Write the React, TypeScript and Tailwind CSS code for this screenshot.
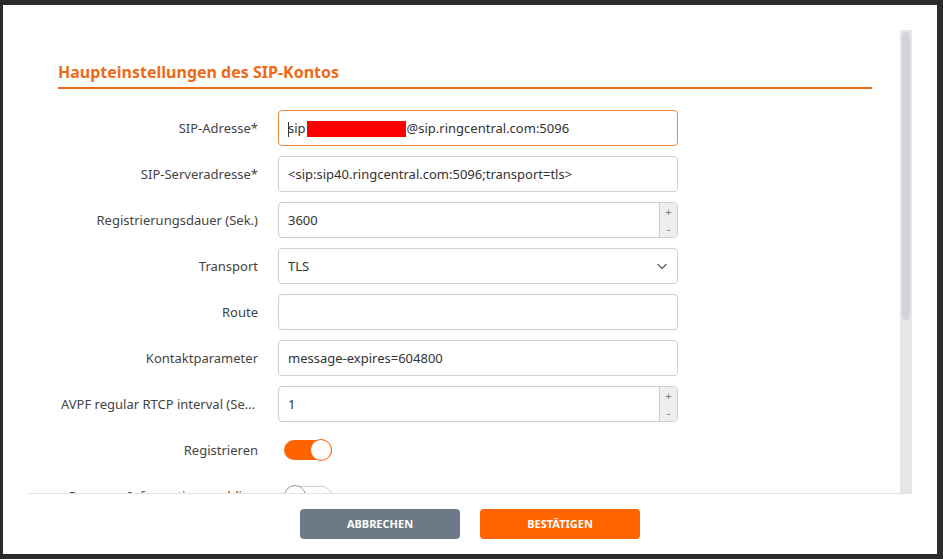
import React from "react";

const font = { fontFamily: '"Noto Sans", "Open Sans", sans-serif' };

function Label({ children }: { children: React.ReactNode }) {
    return (
        <div className="truncate pl-[3px] pt-[2px] text-right text-[13px] text-[#444]">{children}</div>
    );
}

function TextInput({ value, focused }: { value: React.ReactNode; focused?: boolean }) {
    return (
        <div
            className={
                "flex h-[36px] w-[400px] items-center rounded-[4px] border bg-white px-[9px] pt-[2px] text-[13px] text-[#333] " +
                (focused ? "border-[#ec8a3e]" : "border-[#cfcfcf]")
            }
        >
            {value}
        </div>
    );
}

function NumberInput({ value }: { value: string }) {
    return (
        <div className="flex h-[36px] w-[400px] overflow-hidden rounded-[4px] border border-[#cfcfcf] bg-white text-[13px] text-[#333]">
            <div className="flex flex-1 items-center px-[9px] pt-[2px]">{value}</div>
            <div className="flex w-[18px] flex-col border-l border-[#cfcfcf] bg-[#eeeeee] text-[11px] leading-none text-[#777]">
                <div className="flex flex-1 items-center justify-center">+</div>
                <div className="flex flex-1 items-center justify-center">-</div>
            </div>
        </div>
    );
}

function SelectInput({ value }: { value: string }) {
    return (
        <div className="flex h-[36px] w-[400px] items-center justify-between rounded-[4px] border border-[#cfcfcf] bg-white pl-[9px] pr-[9px] text-[13px] text-[#333]">
            <span className="pt-[2px]">{value}</span>
            <svg width="12" height="12" viewBox="0 0 12 12" fill="none">
                <path d="M1.5 4l4.5 4.5L10.5 4" stroke="#666" strokeWidth="1.3" />
            </svg>
        </div>
    );
}

function Toggle({ on }: { on: boolean }) {
    return on ? (
        <div className="relative h-[20px] w-[48px] rounded-full bg-[#ff6300]">
            <div className="absolute right-0 top-[-1px] h-[22px] w-[22px] rounded-full border border-[#ff6300] bg-white" />
        </div>
    ) : (
        <div className="relative h-[20px] w-[48px] rounded-full border border-[#cfcfcf] bg-white">
            <div className="absolute left-[-1px] top-[-2px] h-[22px] w-[22px] rounded-full border border-[#999] bg-white" />
        </div>
    );
}

export default function App() {
    const rows: { label: string; field: React.ReactNode }[] = [
        {
            label: "SIP-Adresse*",
            field: (
                <TextInput
                    focused
                    value={
                        <span className="flex items-center">
                            <span className="mr-[-1px] inline-block h-[15px] w-px bg-[#333]" />
                            sip
                            <span className="mx-[1px] inline-block h-[16px] w-[99px] bg-[#ff0000]" />
                            @sip.ringcentral.com:5096
                        </span>
                    }
                />
            ),
        },
        { label: "SIP-Serveradresse*", field: <TextInput value="<sip:sip40.ringcentral.com:5096;transport=tls>" /> },
        { label: "Registrierungsdauer (Sek.)", field: <NumberInput value="3600" /> },
        { label: "Transport", field: <SelectInput value="TLS" /> },
        { label: "Route", field: <TextInput value="" /> },
        { label: "Kontaktparameter", field: <TextInput value="message-expires=604800" /> },
        { label: "AVPF regular RTCP interval (Sek.)", field: <NumberInput value="1" /> },
        { label: "Registrieren", field: <div className="flex h-[36px] items-center pl-[6px]"><Toggle on /></div> },
        { label: "Presence Information enabling", field: <div className="flex h-[36px] items-center pl-[6px]"><Toggle on={false} /></div> },
    ];

    return (
        <div className="h-[559px] w-[943px] bg-[#2b2b2b] pb-[5px] pl-[3px] pr-[6px] pt-[5px]" style={font}>
            <div className="flex h-[549px] w-[934px] flex-col bg-white">
                <div className="px-[25px] pt-[25px]">
                    <div className="flex h-[464px] border-b border-[#e3e3e3]">
                        <div className="flex-1 overflow-hidden pl-[30px] pr-[28px] pt-[31px]">
                            <h2 className="border-b-2 border-[#ee6a16] pb-[4px] text-[16px] font-bold leading-[22px] text-[#ee6a16]">
                                Haupteinstellungen des SIP-Kontos
                            </h2>
                            <div className="mt-[21px] flex flex-col gap-[10px]">
                                {rows.map((r) => (
                                    <div key={r.label} className="grid grid-cols-[200px_400px] items-center gap-[20px]">
                                        <Label>{r.label}</Label>
                                        {r.field}
                                    </div>
                                ))}
                            </div>
                        </div>
                        <div className="w-[12px] bg-[#e5e6e8] px-[2px] pt-[2px]">
                            <div className="h-[288px] rounded-full bg-[#d0d3d8]" />
                        </div>
                    </div>
                </div>
                <div className="flex flex-1 items-center justify-center gap-[20px] pb-[1px]">
                    <button className="h-[30px] w-[160px] rounded-[4px] bg-[#6b7a86] pt-[1px] text-[11px] font-bold text-white">
                        ABBRECHEN
                    </button>
                    <button className="h-[30px] w-[160px] rounded-[4px] bg-[#ff6400] pt-[1px] text-[11px] font-bold text-white">
                        BESTÄTIGEN
                    </button>
                </div>
            </div>
        </div>
    );
}
